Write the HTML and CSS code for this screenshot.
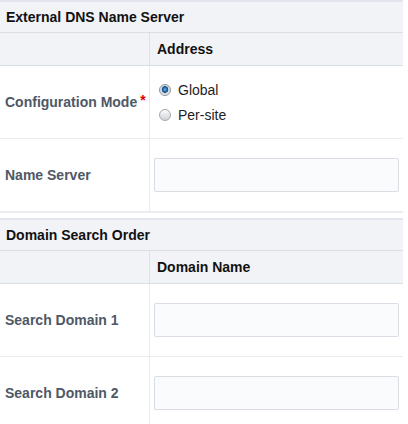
FILE: index.html
```html
<!DOCTYPE html>
<html>
<head>
<meta charset="utf-8">
<link rel="stylesheet" href="styles.css">
</head>
<body>
<div class="page">
  <section class="section">
    <div class="section-title">External DNS Name Server</div>
    <div class="grid">
      <div class="hcell hleft"></div>
      <div class="hcell">Address</div>
      <div class="lcell">Configuration Mode<span class="req">*</span></div>
      <div class="vcell radios">
        <label class="opt"><input type="radio" name="mode" checked><span>Global</span></label>
        <label class="opt"><input type="radio" name="mode"><span>Per-site</span></label>
      </div>
      <div class="lcell">Name Server</div>
      <div class="vcell"><input class="field" type="text"></div>
    </div>
  </section>
  <section class="section">
    <div class="section-title">Domain Search Order</div>
    <div class="grid">
      <div class="hcell hleft"></div>
      <div class="hcell">Domain Name</div>
      <div class="lcell">Search Domain 1</div>
      <div class="vcell"><input class="field" type="text"></div>
      <div class="lcell">Search Domain 2</div>
      <div class="vcell"><input class="field" type="text"></div>
    </div>
  </section>
</div>
</body>
</html>
```
FILE: styles.css
```css
html, body {
  margin: 0;
  padding: 0;
  background: #ffffff;
}
body {
  font-family: "Liberation Sans", Arial, sans-serif;
  font-size: 14px;
  color: #222222;
}
.page {
  width: 403px;
}
.section {
  border-top: 2px solid #e2e6ec;
  border-bottom: 1px solid #eceef2;
  margin-bottom: 5px;
}
.section-title {
  height: 30px;
  line-height: 31px;
  background: #f1f3f7;
  border-bottom: 1px solid #d9dfe6;
  font-weight: bold;
  padding-left: 6px;
  color: #111111;
}
.grid {
  display: grid;
  grid-template-columns: 150px 1fr;
}
.hcell {
  height: 32px;
  line-height: 32px;
  background: #f1f3f7;
  border-bottom: 1px solid #d9dfe6;
  font-weight: bold;
  color: #111111;
  padding-left: 7px;
}
.hleft {
  padding-left: 0;
  border-right: 1px solid #dde2e8;
}
.lcell {
  height: 72px;
  display: flex;
  align-items: center;
  padding-left: 5px;
  border-right: 1px solid #e9ebee;
  border-bottom: 1px solid #e9ebee;
  font-weight: bold;
  color: #4e5866;
  box-sizing: border-box;
  height: 73px;
}
.req {
  color: #e00000;
  margin-left: 3px;
  position: relative;
  top: -2px;
}
.vcell {
  height: 73px;
  box-sizing: border-box;
  border-bottom: 1px solid #e9ebee;
  display: flex;
  align-items: center;
  padding: 0 4px;
}
.radios {
  flex-direction: column;
  align-items: flex-start;
  justify-content: center;
  padding-left: 9px;
}
.opt {
  display: flex;
  align-items: center;
  height: 25px;
  gap: 7px;
  color: #1e1e1e;
}
.opt input {
  -webkit-appearance: none;
  appearance: none;
  margin: 0;
  width: 12px;
  height: 12px;
  border-radius: 50%;
  border: 1px solid #a3a8ae;
  box-sizing: border-box;
  background: linear-gradient(#fafbfc, #cfd2d6);
}
.opt input:checked {
  border-color: #8f959c;
  background: radial-gradient(circle at 50% 45%, #7fbcec 0, #2a78c0 1.6px, #184f86 3px, #d3d6da 3.6px, #eef0f2 6px);
}
.field {
  width: 100%;
  height: 34px;
  box-sizing: border-box;
  border: 1px solid #dadee4;
  border-radius: 2px;
  background: #fafbfd;
  margin: 0;
  padding: 0 6px;
  font-family: inherit;
  font-size: 14px;
}
```
